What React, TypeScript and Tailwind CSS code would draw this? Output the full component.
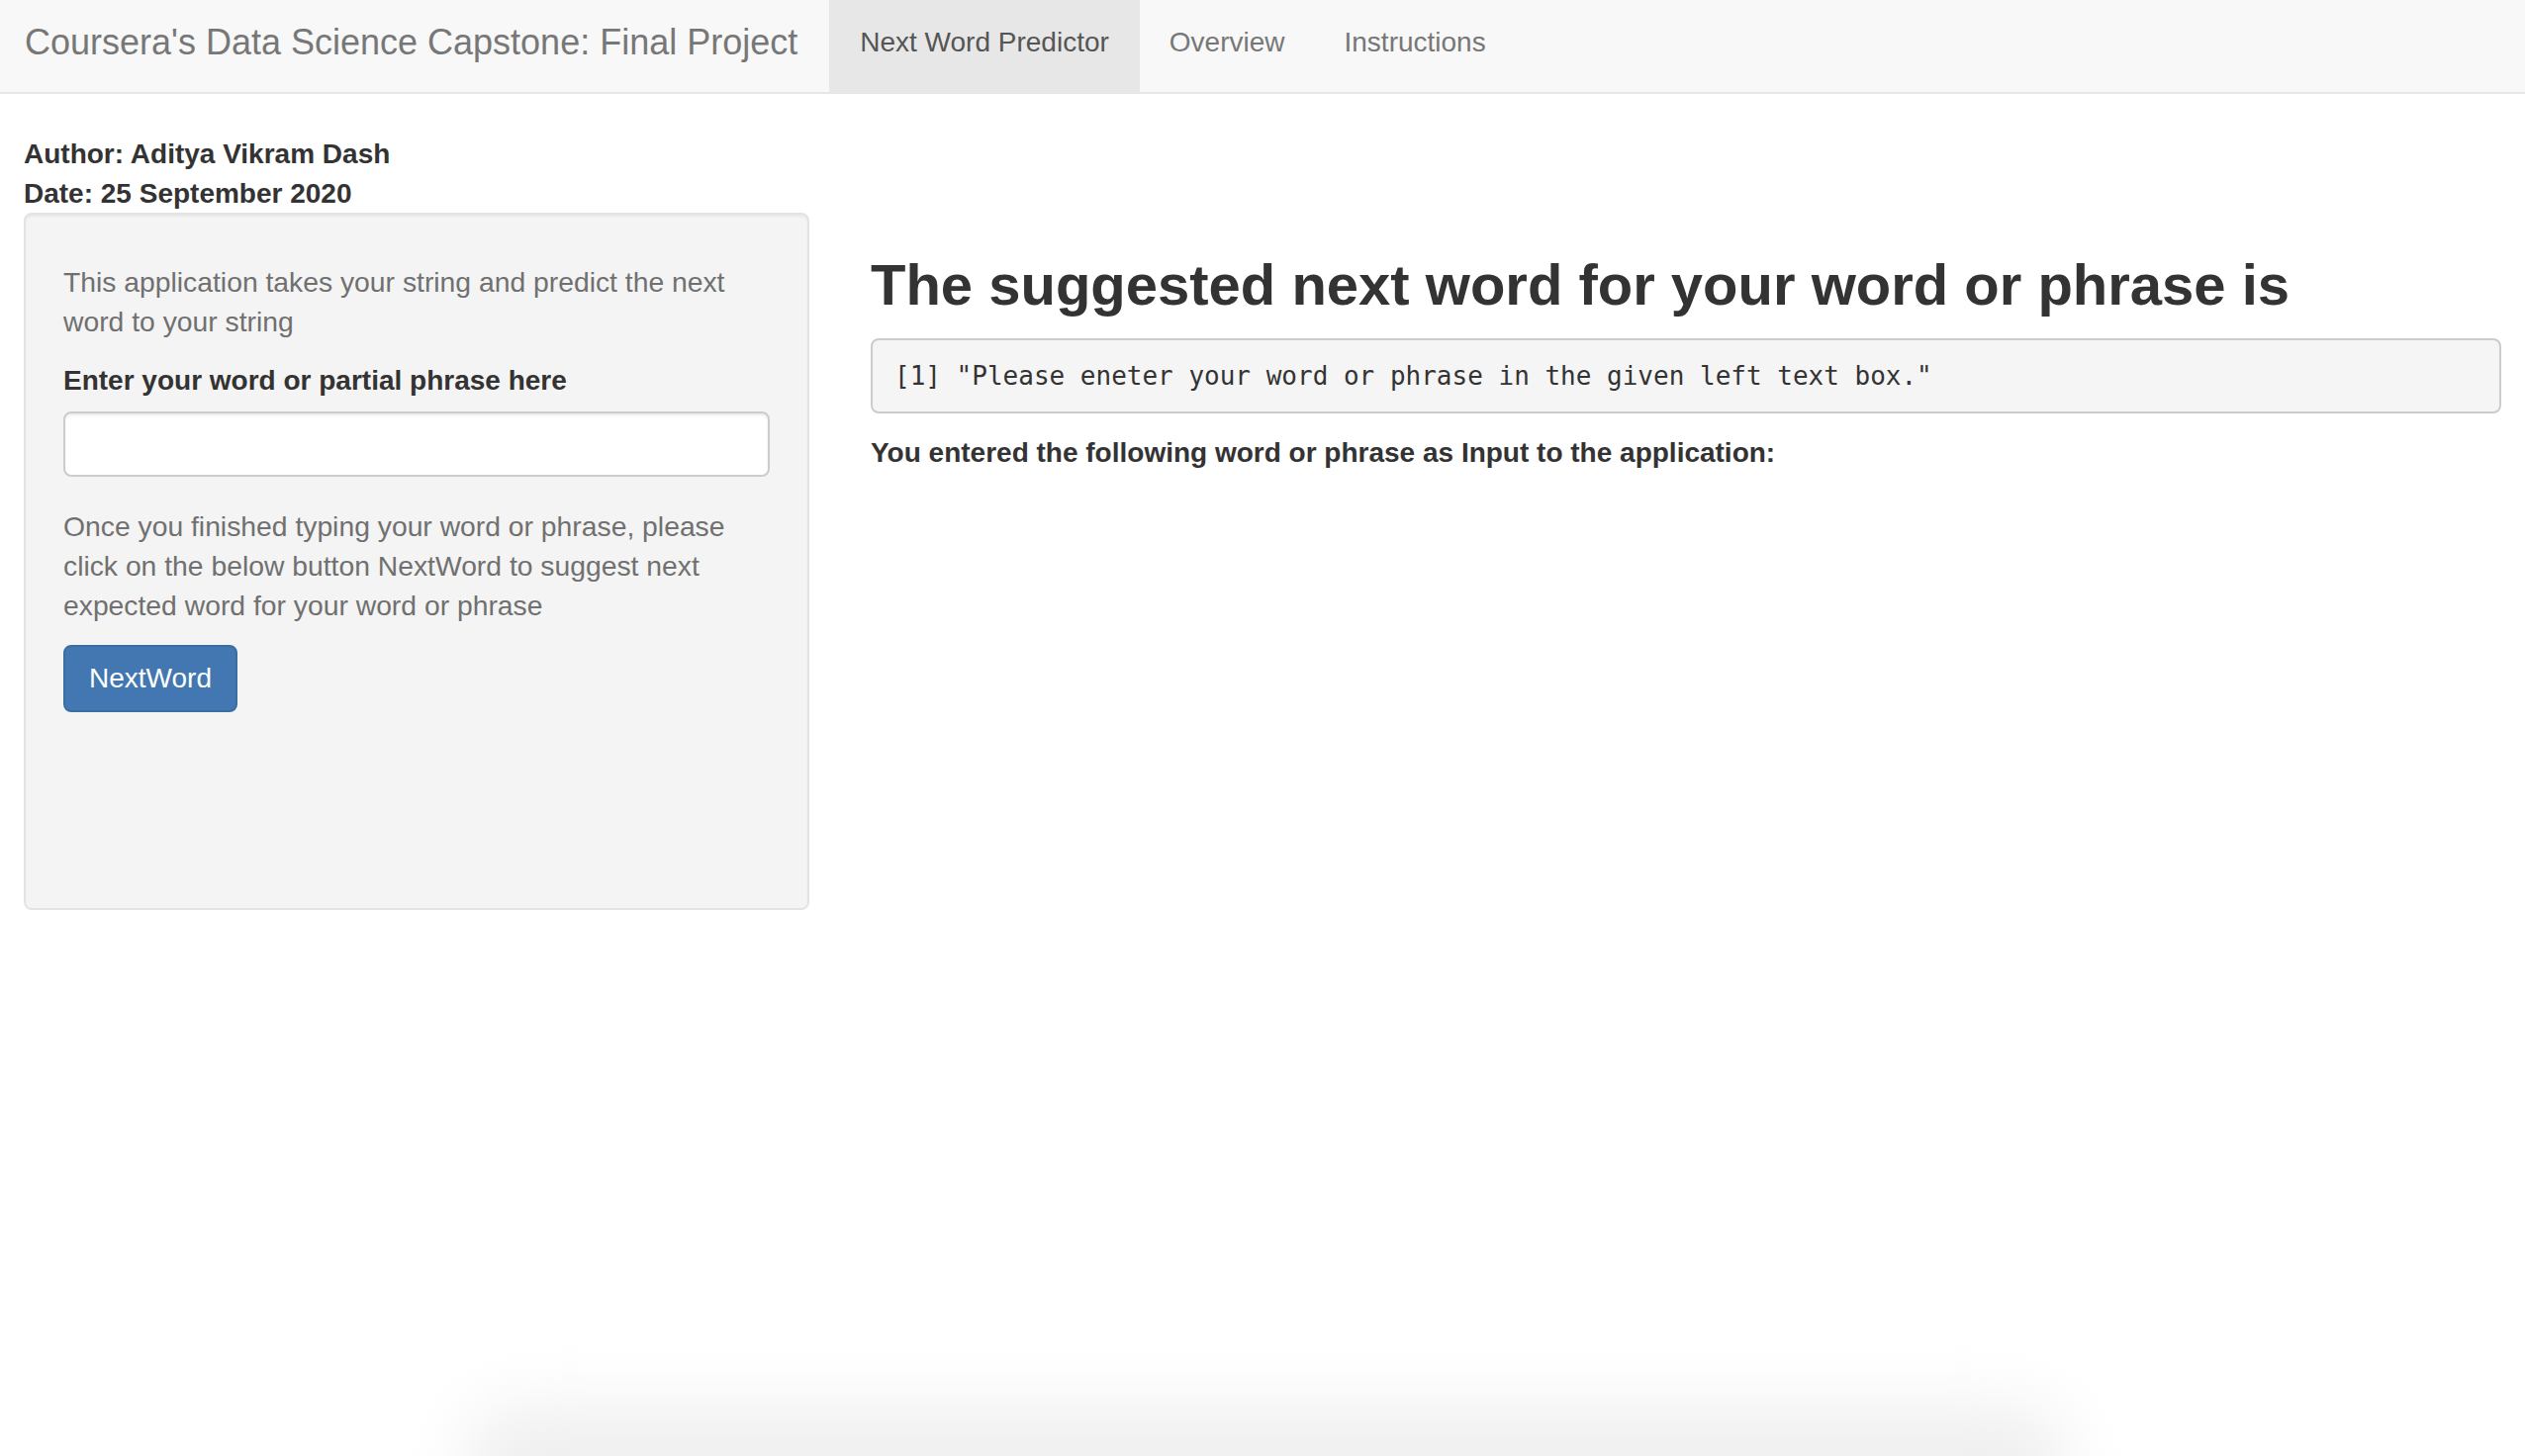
import React from "react";

export default function App() {
  const sans = { fontFamily: '"Liberation Sans", Arial, Helvetica, sans-serif' };
  return (
    <div
      className="relative h-[1472px] w-full overflow-hidden bg-white text-[#333333]"
      style={sans}
    >
      {/* Navbar */}
      <nav className="flex h-[95px] border-b-2 border-[#e7e7e7] bg-[#f8f8f8]">
        <div className="pl-[25px] pr-[31px] pt-[23px] text-[36px] leading-[40px] text-[#777777]">
          Coursera&apos;s Data Science Capstone: Final Project
        </div>
        <div className="ml-[1px] flex">
          <div className="bg-[#e7e7e7] px-[31px] pt-[23px] text-[28px] leading-[40px] text-[#555555]">
            Next Word Predictor
          </div>
          <div className="px-[30px] pt-[23px] text-[28px] leading-[40px] text-[#777777]">
            Overview
          </div>
          <div className="px-[30px] pt-[23px] text-[28px] leading-[40px] text-[#777777]">
            Instructions
          </div>
        </div>
      </nav>

      <div className="px-[24px]">
        {/* Title panel */}
        <div className="pt-[41px] text-[28px] font-bold leading-[40px] text-[#333333]">
          <div>Author: Aditya Vikram Dash</div>
          <div className="leading-[39px]">Date: 25 September 2020</div>
        </div>

        <div className="flex gap-[62px]">
          {/* Sidebar */}
          <div className="h-[705px] w-[794px] shrink-0 rounded-[8px] border-2 border-[#e3e3e3] bg-[#f4f4f4] px-[38px] pt-[48px] shadow-[inset_0_2px_2px_rgba(0,0,0,0.05)]">
            <p className="mb-[20px] text-[28.3px] leading-[40px] text-[#707070]">
              This application takes your string and predict the next word to your string
            </p>
            <div className="mb-[30px]">
              <label className="mb-[11px] block text-[28px] font-bold leading-[40px] text-[#333333]">
                Enter your word or partial phrase here
              </label>
              <input
                type="text"
                className="block h-[66px] w-full rounded-[8px] border-2 border-[#cccccc] bg-white px-[24px] text-[28px] shadow-[inset_0_2px_2px_rgba(0,0,0,0.075)] outline-none"
              />
            </div>
            <p className="mb-[20px] text-[28.3px] leading-[40px] text-[#707070]">
              Once you finished typing your word or phrase, please click on the below button NextWord to suggest next expected word for your word or phrase
            </p>
            <button
              type="button"
              className="h-[68px] rounded-[8px] border-2 border-[#3b6ca2] bg-[#4277b1] px-[24px] text-[28px] leading-[40px] text-white"
            >
              NextWord
            </button>
          </div>

          {/* Main */}
          <div className="min-w-0 flex-1">
            <h2 className="mt-[43px] mb-[24px] text-[58px] font-bold leading-[60px] text-[#333333]">
              The suggested next word for your word or phrase is
            </h2>
            <pre
              className="mb-[20px] h-[76px] rounded-[8px] border-2 border-[#cccccc] bg-[#f5f5f5] px-[22px] py-[17px] text-[26px] leading-[38px] text-[#333333]"
              style={{ fontFamily: '"DejaVu Sans Mono", "Liberation Mono", monospace' }}
            >
              [1] &quot;Please eneter your word or phrase in the given left text box.&quot;
            </pre>
            <div className="text-[28px] font-bold leading-[40px] text-[#333333]">
              You entered the following word or phrase as Input to the application:
            </div>
          </div>
        </div>
      </div>

      {/* bottom shadow (overlay) */}
      <div className="pointer-events-none absolute bottom-[-60px] left-[470px] h-[110px] w-[1620px] rounded-[60px] bg-[#efefef] blur-[32px]" />
    </div>
  );
}
